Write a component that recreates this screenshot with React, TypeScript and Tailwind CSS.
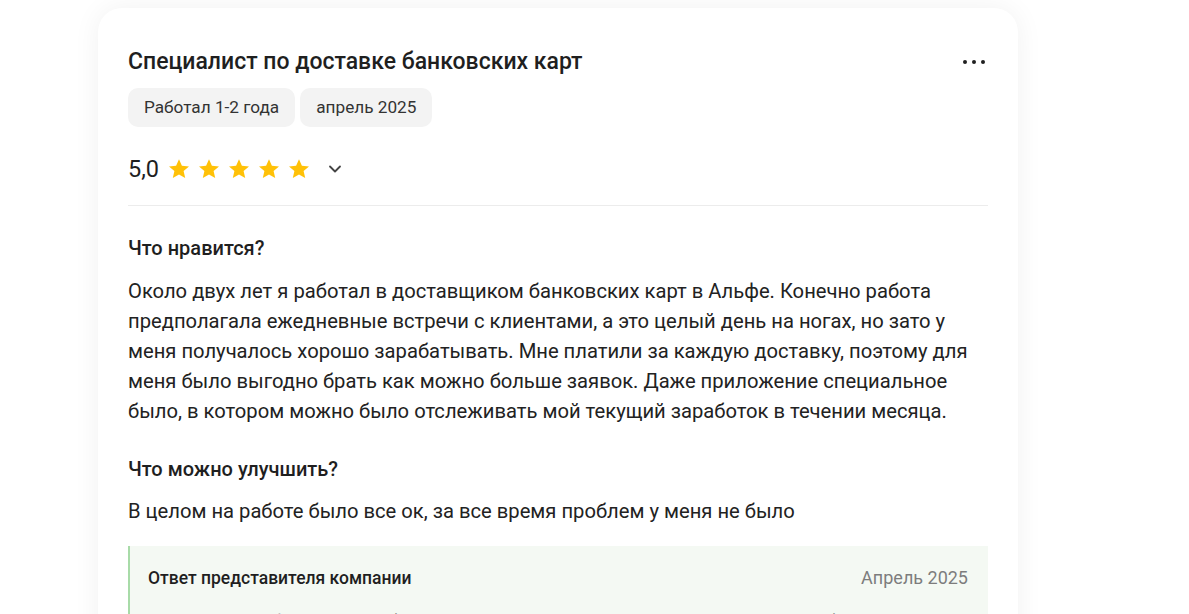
import { ChevronDown } from 'lucide-react';

const Star = () => (
    <svg viewBox="0 0 24 24" className="h-[24px] w-[24px]" fill="#ffc107">
        <path d="M12 2.2l2.9 6.6 7.1.6-5.4 4.7 1.6 7-6.2-3.7-6.2 3.7 1.6-7L2 9.4l7.1-.6z" />
    </svg>
);

const App = () => {
    return (
        <div className="min-h-screen bg-white pl-[98px] pt-[8px] font-['Roboto',sans-serif] text-[#1f1f1f]">
            <div className="w-[920px] rounded-[24px] bg-white px-[30px] pt-[40px] pb-[40px] shadow-[0_0_28px_rgba(0,0,0,0.06)]">
                <div className="flex items-center justify-between">
                    <h2 className="text-[23px] font-medium leading-[28px]">
                        Специалист по доставке банковских карт
                    </h2>
                    <button className="flex h-[24px] w-[28px] items-center justify-center gap-[5px]">
                        <span className="h-[4px] w-[4px] rounded-full bg-[#1f1f1f]" />
                        <span className="h-[4px] w-[4px] rounded-full bg-[#1f1f1f]" />
                        <span className="h-[4px] w-[4px] rounded-full bg-[#1f1f1f]" />
                    </button>
                </div>

                <div className="mt-[12px] flex gap-[5px]">
                    <span className="rounded-[10px] bg-[#f3f3f3] px-[16px] py-[8px] text-[17.2px] leading-[23px] text-[#333]">
                        Работал 1-2 года
                    </span>
                    <span className="rounded-[10px] bg-[#f3f3f3] px-[16px] py-[8px] text-[17.2px] leading-[23px] text-[#333]">
                        апрель 2025
                    </span>
                </div>

                <div className="mt-[28px] flex items-center border-b border-[#ececec] pb-[22px]">
                    <span className="text-[23.5px] leading-[28px]">5,0</span>
                    <div className="ml-[8px] flex gap-[6px]">
                        <Star />
                        <Star />
                        <Star />
                        <Star />
                        <Star />
                    </div>
                    <ChevronDown className="ml-[14px] h-[20px] w-[20px] text-[#444]" strokeWidth={2.2} />
                </div>

                <h3 className="mt-[30px] text-[20px] font-medium leading-[24px]">Что нравится?</h3>
                <p className="mt-[16px] text-[20.2px] leading-[30px] text-[#222]">
                    Около двух лет я работал в доставщиком банковских карт в Альфе. Конечно работа
                    предполагала ежедневные встречи с клиентами, а это целый день на ногах, но зато у
                    меня получалось хорошо зарабатывать. Мне платили за каждую доставку, поэтому для
                    меня было выгодно брать как можно больше заявок. Даже приложение специальное
                    было, в котором можно было отслеживать мой текущий заработок в течении месяца.
                </p>

                <h3 className="mt-[31px] text-[20px] font-medium leading-[24px]">Что можно улучшить?</h3>
                <p className="mt-[15px] text-[20.2px] leading-[30px] text-[#222]">
                    В целом на работе было все ок, за все время проблем у меня не было
                </p>

                <div className="mt-[20px] border-l-2 border-[#a8dba8] bg-[#f4f9f3] px-[18px] pt-[20px] pb-[20px]">
                    <div className="flex items-center justify-between">
                        <span className="text-[17.5px] font-medium leading-[24px]">Ответ представителя компании</span>
                        <span className="mr-[2px] text-[18px] leading-[24px] text-[#7d7d7d]">Апрель 2025</span>
                    </div>
                    <p className="mt-[17px] text-[18px] leading-[30px] text-[#222]">
                        Здравствуйте, Федор! Спасибо за ваш отзыв и за то, что поделились опытом работы в нашей команде.
                    </p>
                </div>
            </div>
        </div>
    );
};

export default App;
